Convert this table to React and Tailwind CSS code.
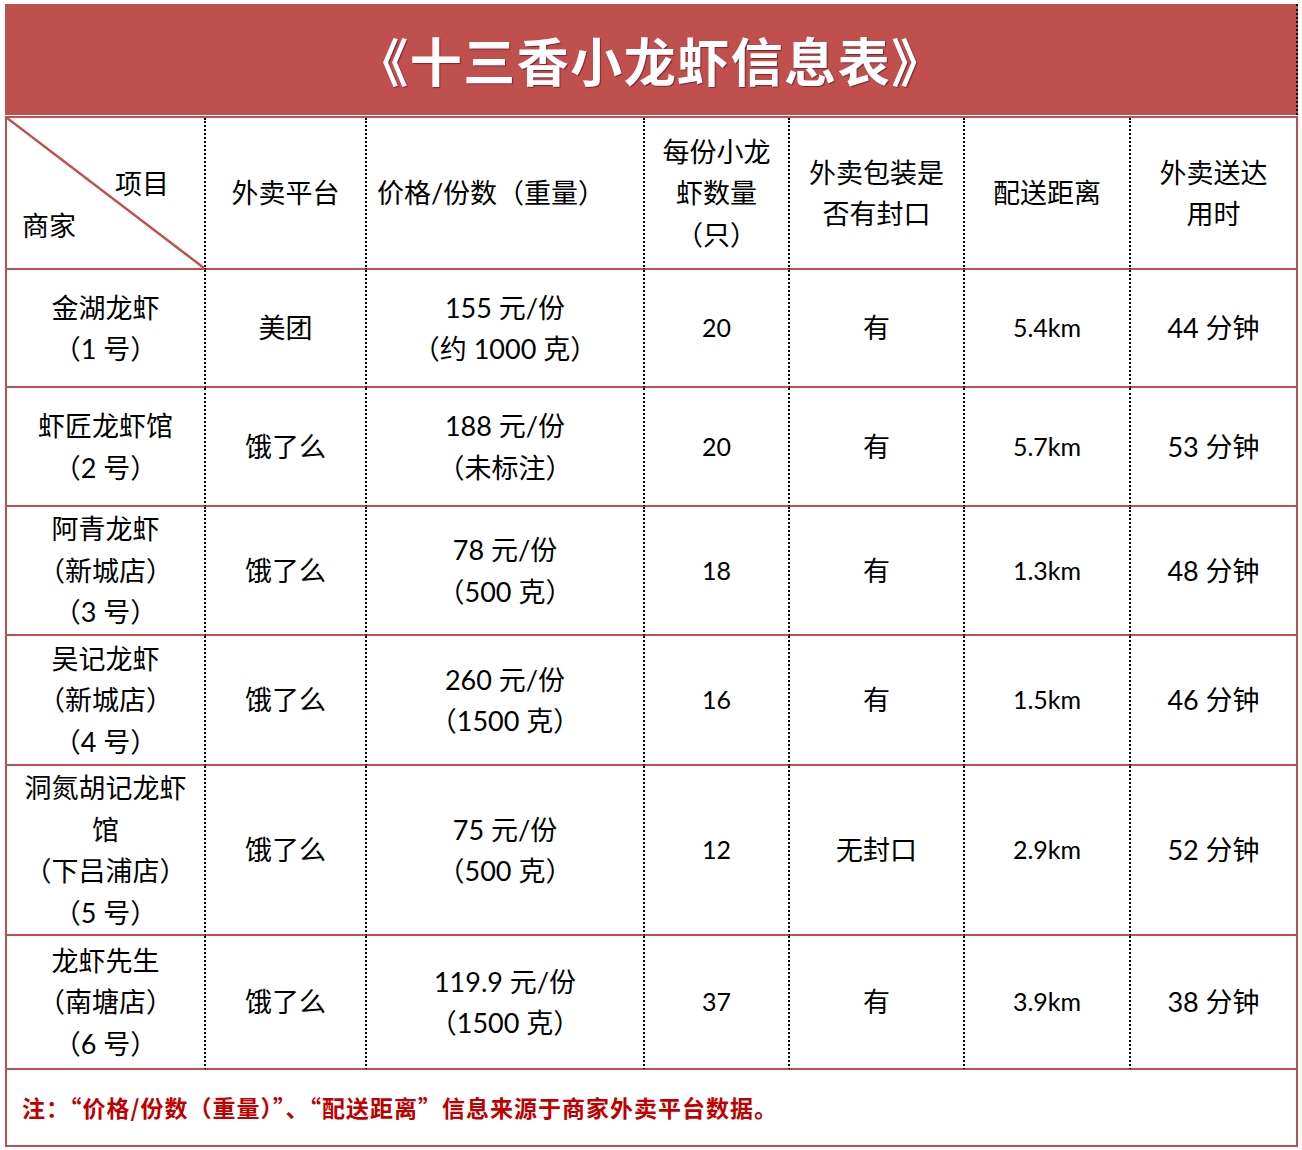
const rows = [
  { shop: ["金湖龙虾", "（1 号）"], platform: "美团", price: ["155 元/份", "（约 1000 克）"], count: "20", seal: "有", dist: "5.4km", time: "44 分钟", h: "h-[118px]" },
  { shop: ["虾匠龙虾馆", "（2 号）"], platform: "饿了么", price: ["188 元/份", "（未标注）"], count: "20", seal: "有", dist: "5.7km", time: "53 分钟", h: "h-[119px]" },
  { shop: ["阿青龙虾", "（新城店）", "（3 号）"], platform: "饿了么", price: ["78 元/份", "（500 克）"], count: "18", seal: "有", dist: "1.3km", time: "48 分钟", h: "h-[129px]" },
  { shop: ["吴记龙虾", "（新城店）", "（4 号）"], platform: "饿了么", price: ["260 元/份", "（1500 克）"], count: "16", seal: "有", dist: "1.5km", time: "46 分钟", h: "h-[130px]" },
  { shop: ["洞氮胡记龙虾", "馆", "（下吕浦店）", "（5 号）"], platform: "饿了么", price: ["75 元/份", "（500 克）"], count: "12", seal: "无封口", dist: "2.9km", time: "52 分钟", h: "h-[170px]" },
  { shop: ["龙虾先生", "（南塘店）", "（6 号）"], platform: "饿了么", price: ["119.9 元/份", "（1500 克）"], count: "37", seal: "有", dist: "3.9km", time: "38 分钟", h: "h-[134px]" },
]

function Cell({ children, last, className = "" }) {
  return (
    <div
      className={
        "flex flex-col items-center justify-center text-center border-b-2 border-b-[#c0504d] [border-bottom-style:solid] " +
        (last ? "border-r-2 border-r-[#c0504d] [border-right-style:solid] " : "border-r-2 border-r-black [border-right-style:dotted] ") +
        className
      }
    >
      {children}
    </div>
  )
}

function Lines({ items }) {
  return items.map((t, i) => <div key={i}>{t}</div>)
}

export default function App() {
  return (
    <div className="w-[1302px] h-[1150px] bg-white pt-[4px] text-black" style={{ fontFamily: '"Lato", "Noto Sans CJK SC", sans-serif' }}>
      <div className="ml-[5px] w-[1293px]">
        {/* Title band */}
        <div className="h-[111px] bg-[#c0504d] border-r-2 border-r-black [border-right-style:dotted] flex items-center justify-center">
          <h1
            className="text-white text-[52px] font-bold tracking-[1.5px] [text-shadow:1px_1px_1px_rgba(70,0,20,0.55)]"
            style={{ fontFamily: '"Noto Sans CJK SC", sans-serif' }}
          >
            《十三香小龙虾信息表》
          </h1>
        </div>
        <div className="h-[1px] bg-white" />

        {/* Table */}
        <div className="border-l-2 border-l-[#c0504d] border-t-2 border-t-[#c0504d] border-solid">
          <div className="grid grid-cols-[199px_161px_278px_145px_175px_166px_167px] text-[27px] leading-[41.5px]">
            {/* Header row */}
            <Cell className="relative h-[152px] !items-start !justify-start pt-[45px] pl-[15px]">
              <svg className="absolute inset-0 w-full h-full" preserveAspectRatio="none" viewBox="0 0 100 100">
                <line x1="0" y1="0" x2="100" y2="100" stroke="#c0504d" strokeWidth="2.5" vectorEffect="non-scaling-stroke" />
              </svg>
              <div className="ml-[93px]">项目</div>
              <div>商家</div>
            </Cell>
            <Cell className="h-[152px]">外卖平台</Cell>
            <Cell className="h-[152px] pr-[28px]">价格/份数（重量）</Cell>
            <Cell className="h-[152px]">
              <Lines items={["每份小龙", "虾数量", "（只）"]} />
            </Cell>
            <Cell className="h-[152px]">
              <Lines items={["外卖包装是", "否有封口"]} />
            </Cell>
            <Cell className="h-[152px]">配送距离</Cell>
            <Cell className="h-[152px]" last>
              <Lines items={["外卖送达", "用时"]} />
            </Cell>

            {rows.map((r, i) => (
              <div key={i} className="contents">
                <Cell className={r.h}>
                  <Lines items={r.shop} />
                </Cell>
                <Cell className={r.h}>{r.platform}</Cell>
                <Cell className={r.h}>
                  <Lines items={r.price} />
                </Cell>
                <Cell className={r.h + " text-[25px]"}>{r.count}</Cell>
                <Cell className={r.h}>{r.seal}</Cell>
                <Cell className={r.h + " text-[25px]"}>{r.dist}</Cell>
                <Cell className={r.h} last>
                  {r.time}
                </Cell>
              </div>
            ))}
          </div>

          {/* Footnote */}
          <div className="h-[77px] flex items-center pl-[15px] border-r-2 border-r-[#c0504d] border-b-2 border-b-[#c0504d] border-solid">
            <p
              className="text-[23px] tracking-[1px] font-bold text-[#c00000]"
              style={{ fontFamily: '"Noto Sans CJK SC", sans-serif' }}
            >
              注：“价格/份数（重量）”、“配送距离”信息来源于商家外卖平台数据。
            </p>
          </div>
        </div>
      </div>
    </div>
  )
}
